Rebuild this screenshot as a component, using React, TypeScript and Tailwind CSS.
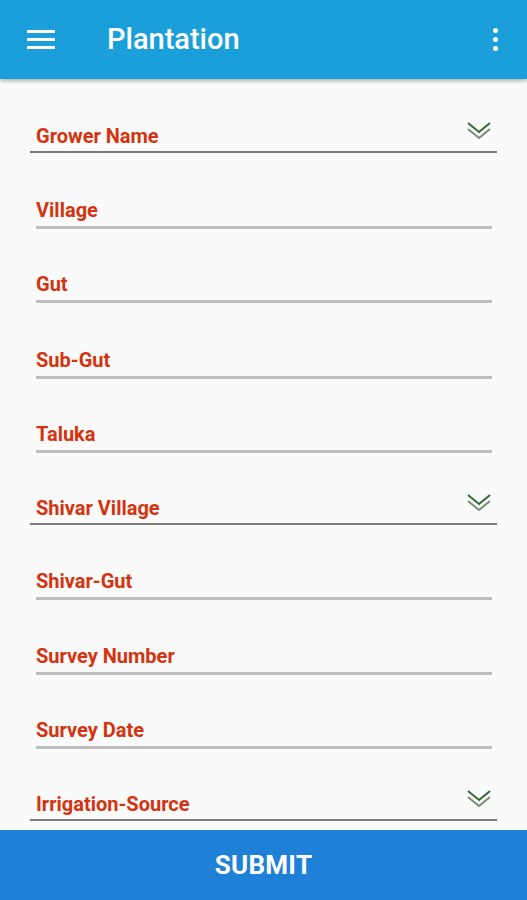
import { useState } from "react";

type Field = {
  label: string;
  spinner?: boolean;
  height: string;
};

const fields: Field[] = [
  { label: "Grower Name", spinner: true, height: "h-[74px]" },
  { label: "Village", height: "h-[76px]" },
  { label: "Gut", height: "h-[74px]" },
  { label: "Sub-Gut", height: "h-[76px]" },
  { label: "Taluka", height: "h-[74px]" },
  { label: "Shivar Village", spinner: true, height: "h-[72px]" },
  { label: "Shivar-Gut", height: "h-[75px]" },
  { label: "Survey Number", height: "h-[75px]" },
  { label: "Survey Date", height: "h-[74px]" },
  { label: "Irrigation-Source", spinner: true, height: "h-[72px]" }
];

function DoubleChevron() {
  return (
    <svg width="26" height="20" viewBox="0 0 26 20" fill="none">
      <polyline points="2,7 13,16 24,7" stroke="#7a8a7a" strokeWidth="2" />
      <polyline points="2,1 13,10 24,1" stroke="#2e6b33" strokeWidth="2" />
    </svg>
  );
}

function FormField({ field }: { field: Field }) {
  if (field.spinner) {
    return (
      <div className={`${field.height} flex flex-col justify-end px-[30px]`}>
        <div className="flex items-end justify-between border-b-2 border-[#7b7b7b] pb-[3px] pl-[6px] pr-[5px]">
          <span className="text-[20px] font-bold leading-[24px] text-[#d4330f]">{field.label}</span>
          <span className="mb-[6px]">
            <DoubleChevron />
          </span>
        </div>
      </div>
    );
  }
  return (
    <div className={`${field.height} flex flex-col justify-end pl-[36px] pr-[35px]`}>
      <div className="border-b-[3px] border-[#bdbdbd] pb-[2px]">
        <span className="text-[20px] font-bold leading-[24px] text-[#d4330f]">{field.label}</span>
      </div>
    </div>
  );
}

export default function App() {
  const [submitted, setSubmitted] = useState(false);

  return (
    <div
      className="flex h-[900px] w-full flex-col overflow-hidden bg-[#fafafa]"
      style={{ fontFamily: "Roboto, 'Liberation Sans', sans-serif" }}
    >
      <header className="relative z-10 flex h-[79px] shrink-0 items-center bg-[#1b9fda] shadow-[0_2px_4px_rgba(0,0,0,0.3)]">
        <button className="ml-[27px] flex w-[28px] flex-col gap-[5px]">
          <span className="h-[3px] w-full bg-white" />
          <span className="h-[3px] w-full bg-white" />
          <span className="h-[3px] w-full bg-white" />
        </button>
        <h1 className="ml-[52px] text-[29px] font-medium text-white">Plantation</h1>
        <button className="ml-auto mr-[29px] flex flex-col gap-[4px]">
          <span className="h-[5px] w-[5px] rounded-full bg-white" />
          <span className="h-[5px] w-[5px] rounded-full bg-white" />
          <span className="h-[5px] w-[5px] rounded-full bg-white" />
        </button>
      </header>

      <main className="flex-1">
        {fields.map((field) => (
          <FormField key={field.label} field={field} />
        ))}
      </main>

      <button
        onClick={() => setSubmitted(!submitted)}
        className="h-[70px] shrink-0 bg-[#1e80d7] text-[26px] font-bold tracking-[0.3px] text-white"
      >
        SUBMIT
      </button>
    </div>
  );
}
